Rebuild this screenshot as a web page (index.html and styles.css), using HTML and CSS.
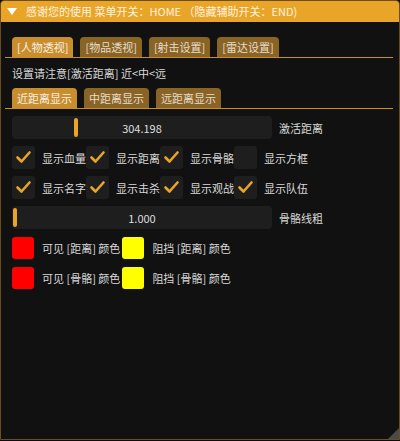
FILE: index.html
```html
<!DOCTYPE html>
<html lang="zh">
<head>
<meta charset="utf-8">
<link rel="stylesheet" href="styles.css">
</head>
<body>
<div class="window">
  <div class="titlebar">
    <svg class="arrow" width="10" height="7" viewBox="0 0 10 7"><polygon points="0,0 10,0 5,7" fill="#fff"/></svg>
    <span class="title">感谢您的使用 菜单开关：HOME （隐藏辅助开关：END)</span>
  </div>
  <div class="content">
    <div class="tabbar">
      <div class="tab active">[人物透视]</div>
      <div class="tab">[物品透视]</div>
      <div class="tab">[射击设置]</div>
      <div class="tab">[雷达设置]</div>
    </div>
    <div class="info">设置请注意[激活距离] 近&lt;中&lt;远</div>
    <div class="tabbar">
      <div class="tab active">近距离显示</div>
      <div class="tab">中距离显示</div>
      <div class="tab">远距离显示</div>
    </div>
    <div class="rows">
      <div class="row">
        <div class="slider"><span class="grab" style="left:62px"></span><span class="val">304.198</span></div>
        <span class="label">激活距离</span>
      </div>
      <div class="checks">
        <div class="check"><span class="box on"><svg viewBox="0 0 23 23"><polyline points="5.5,11.5 9.5,15.5 17.5,6.5"/></svg></span><span class="label">显示血量</span></div>
        <div class="check"><span class="box on"><svg viewBox="0 0 23 23"><polyline points="5.5,11.5 9.5,15.5 17.5,6.5"/></svg></span><span class="label">显示距离</span></div>
        <div class="check"><span class="box on"><svg viewBox="0 0 23 23"><polyline points="5.5,11.5 9.5,15.5 17.5,6.5"/></svg></span><span class="label">显示骨骼</span></div>
        <div class="check"><span class="box"></span><span class="label">显示方框</span></div>
      </div>
      <div class="checks">
        <div class="check"><span class="box on"><svg viewBox="0 0 23 23"><polyline points="5.5,11.5 9.5,15.5 17.5,6.5"/></svg></span><span class="label">显示名字</span></div>
        <div class="check"><span class="box on"><svg viewBox="0 0 23 23"><polyline points="5.5,11.5 9.5,15.5 17.5,6.5"/></svg></span><span class="label">显示击杀</span></div>
        <div class="check"><span class="box on"><svg viewBox="0 0 23 23"><polyline points="5.5,11.5 9.5,15.5 17.5,6.5"/></svg></span><span class="label">显示观战</span></div>
        <div class="check"><span class="box on"><svg viewBox="0 0 23 23"><polyline points="5.5,11.5 9.5,15.5 17.5,6.5"/></svg></span><span class="label">显示队伍</span></div>
      </div>
      <div class="row">
        <div class="slider"><span class="grab" style="left:1px"></span><span class="val">1.000</span></div>
        <span class="label">骨骼线粗</span>
      </div>
      <div class="colors">
        <span class="swatch red"></span><span class="label">可见 [距离] 颜色</span>
        <span class="swatch yellow"></span><span class="label">阻挡 [距离] 颜色</span>
      </div>
      <div class="colors">
        <span class="swatch red"></span><span class="label">可见 [骨骼] 颜色</span>
        <span class="swatch yellow"></span><span class="label">阻挡 [骨骼] 颜色</span>
      </div>
    </div>
  </div>
  <div class="grip"></div>
</div>
</body>
</html>
```
FILE: styles.css
```css
* { box-sizing: border-box; }
html, body { margin: 0; padding: 0; background: #0d0d0d; }
body {
  font-family: "Noto Sans CJK SC", "Noto Sans", sans-serif;
  font-size: 11px;
  color: #d9d9d9;
}
.window {
  position: relative;
  width: 400px;
  height: 440px;
  background: #111111;
  border: 1px solid #6b4f1e;
  border-radius: 4px 4px 0 0;
  overflow: hidden;
}
.titlebar {
  height: 21px;
  background: #e9a527;
  display: flex;
  align-items: center;
  padding-left: 6px;
  color: #fff3e0;
  white-space: nowrap;
}
.arrow { margin-right: 9px; }
.title { line-height: 21px; }
.content {
  padding: 15px 6px 0 11px;
}
.tabbar {
  display: flex;
  gap: 7px;
  height: 21px;
  margin-left: -7px;
  padding-left: 7px;
  border-bottom: 1px solid #c88e2d;
}
.tab {
  height: 20px;
  line-height: 20px;
  padding: 0 5px;
  background: #8a6425;
  border-radius: 4px 4px 0 0;
  color: #e6dccd;
  white-space: nowrap;
}
.tab.active { background: #c88e2d; color: #f7efe3; }
.info {
  height: 16px;
  line-height: 16px;
  margin: 7px 0;
  white-space: nowrap;
}
.rows {
  display: flex;
  flex-direction: column;
  gap: 7px;
  margin-top: 7px;
}
.row, .colors {
  display: flex;
  align-items: center;
  height: 23px;
}
.slider {
  position: relative;
  width: 260px;
  height: 23px;
  background: #1e1e1e;
  border-radius: 4px;
  display: flex;
  align-items: center;
  justify-content: center;
}
.grab {
  position: absolute;
  top: 2px;
  width: 4px;
  height: 19px;
  background: #e9a527;
  border-radius: 2px;
}
.val { color: #dedede; }
.row .label { margin-left: 7px; }
.checks {
  display: grid;
  grid-template-columns: repeat(4, 74px);
  height: 23px;
}
.check {
  display: flex;
  align-items: center;
  white-space: nowrap;
}
.box {
  width: 23px;
  height: 23px;
  background: #1e1e1e;
  border-radius: 3px;
  flex: none;
  margin-right: 7px;
}
.box svg { width: 23px; height: 23px; display: block; }
.box polyline { fill: none; stroke: #e9a527; stroke-width: 2.6; stroke-linecap: round; stroke-linejoin: round; }
.swatch {
  width: 22px;
  height: 22px;
  border-radius: 3px;
  flex: none;
  margin-right: 8px;
}
.swatch.red { background: #ff0000; }
.swatch.yellow { background: #ffff00; }
.colors .label { margin-right: 2px; white-space: nowrap; }
.grip {
  position: absolute;
  right: 0;
  bottom: 0;
  width: 0;
  height: 0;
  border-left: 11px solid transparent;
  border-bottom: 11px solid #4a4a4a;
}
```
